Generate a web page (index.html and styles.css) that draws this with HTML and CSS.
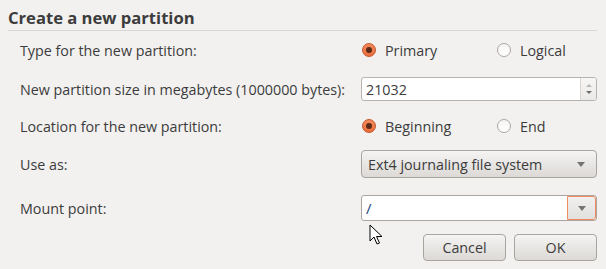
FILE: index.html
```html
<!DOCTYPE html>
<html lang="en">
<head>
    <meta charset="UTF-8">
    <title>Create a new partition</title>
    <link rel="stylesheet" href="styles.css">
</head>
<body>
    <div class="dialog">
        <h2 class="title">Create a new partition</h2>
        <div class="form">
            <div class="label row1">Type for the new partition:</div>
            <div class="control row1">
                <span class="radio on"></span><span class="opt">Primary</span>
                <span class="radio"></span><span class="opt">Logical</span>
            </div>

            <div class="label row2">New partition size in megabytes (1000000 bytes):</div>
            <div class="control row2">
                <div class="spin">
                    <span class="spin-value">21032</span>
                    <span class="spin-btns">
                        <span class="tri up"></span>
                        <span class="tri down"></span>
                    </span>
                </div>
            </div>

            <div class="label row3">Location for the new partition:</div>
            <div class="control row3">
                <span class="radio on"></span><span class="opt">Beginning</span>
                <span class="radio"></span><span class="opt">End</span>
            </div>

            <div class="label row4">Use as:</div>
            <div class="control row4">
                <div class="combo">
                    <span>Ext4 journaling file system</span>
                    <span class="tri down dark"></span>
                </div>
            </div>

            <div class="label row5">Mount point:</div>
            <div class="control row5">
                <div class="entry">
                    <span class="entry-text">/</span>
                    <span class="entry-btn"><span class="tri down dark"></span></span>
                </div>
            </div>
        </div>
        <div class="buttons">
            <button class="btn">Cancel</button>
            <button class="btn">OK</button>
        </div>
        <svg class="pointer" width="14" height="22" viewBox="0 0 14 22">
            <path d="M1 1 L1 17 L5 13 L8 20 L10.5 19 L7.5 12.5 L13 12.5 Z" fill="#fff" stroke="#000" stroke-width="1" stroke-linejoin="round"/>
        </svg>
    </div>
</body>
</html>
```

FILE: styles.css
```css
body {
    margin: 0;
    background-color: #f2f1f0;
    font-family: "Open Sans", "DejaVu Sans", sans-serif;
    font-size: 14.3px;
    color: #3c3c3c;
}
.dialog {
    position: relative;
    width: 606px;
    height: 269px;
    overflow: hidden;
}
.title {
    margin: 0 9px 0 8px;
    padding-top: 8px;
    height: 22px;
    font-size: 16.6px;
    font-weight: bold;
    line-height: 20px;
    color: #3c3c3c;
    border-bottom: 1px solid #d8d6d3;
}
.form {
    display: grid;
    grid-template-columns: 341px 236px;
    grid-template-rows: 38px 40px 34px 42px 46px;
    padding-left: 20px;
}
.label, .control {
    display: flex;
    align-items: center;
}
.opt {
    flex: none;
    width: 111px;
}
.opt:last-child {
    width: auto;
}
.radio {
    width: 12px;
    height: 12px;
    border: 1px solid #a9a49f;
    border-radius: 50%;
    background: linear-gradient(#f6f5f4, #ffffff);
    margin: 0 9px 0 1px;
    flex: none;
    position: relative;
}
.radio.on {
    border-color: #c2552a;
    background: linear-gradient(#f58a5c, #e96d3a);
}
.radio.on::after {
    content: "";
    position: absolute;
    left: 3px;
    top: 3px;
    width: 6px;
    height: 6px;
    border-radius: 50%;
    background: #5a2a18;
}
.spin, .entry {
    display: flex;
    align-items: center;
    width: 234px;
    height: 22px;
    border: 1px solid #b8b3ae;
    border-radius: 3px;
    background: #fff;
    overflow: hidden;
}
.spin-value, .entry-text {
    flex: 1;
    padding-left: 4px;
}
.spin-btns {
    width: 15px;
    height: 100%;
    border-left: 1px solid #d9d6d2;
    background: linear-gradient(#f7f6f5, #ebe9e7);
    display: flex;
    flex-direction: column;
    align-items: center;
    justify-content: center;
    gap: 4px;
}
.tri {
    width: 0;
    height: 0;
    border-left: 3px solid transparent;
    border-right: 3px solid transparent;
}
.tri.up {
    border-bottom: 3px solid #b9b6b3;
}
.tri.down {
    border-top: 3px solid #6f6c69;
}
.tri.dark {
    border-left-width: 4px;
    border-right-width: 4px;
    border-top: 5px solid #767370;
}
.combo {
    display: flex;
    align-items: center;
    justify-content: space-between;
    box-sizing: border-box;
    width: 236px;
    height: 28px;
    padding: 0 11px 0 6px;
    border: 1px solid #aaa49f;
    border-radius: 4px;
    background: linear-gradient(#f5f4f3, #dcd9d6);
}
.entry {
    height: 24px;
    width: 234px;
    border-color: #aaa5a0;
}
.entry-text {
    color: #1d3f7a;
    font-size: 15px;
}
.entry-btn {
    box-sizing: border-box;
    width: 29px;
    height: 100%;
    display: flex;
    align-items: center;
    justify-content: center;
    border: 1px solid #ef8b5f;
    border-radius: 0 3px 3px 0;
    background: linear-gradient(#f1f0ef, #e2e0dd);
}
.buttons {
    display: flex;
    justify-content: flex-end;
    gap: 8px;
    margin: 3px 9px 0 0;
}
.btn {
    width: 83px;
    height: 27px;
    font-family: inherit;
    font-size: 14.3px;
    color: #3c3c3c;
    border: 1px solid #aaa49f;
    border-radius: 4px;
    background: linear-gradient(#f5f4f3, #dcd9d6);
    padding: 0;
}
.pointer {
    position: absolute;
    left: 369px;
    top: 224px;
}
```
